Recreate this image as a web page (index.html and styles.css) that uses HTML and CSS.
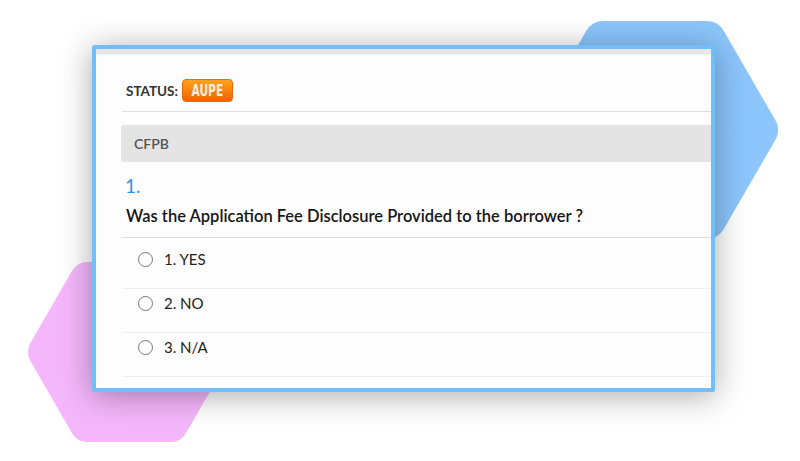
FILE: index.html
```html
<!DOCTYPE html>
<html>
<head>
<meta charset="utf-8">
<link rel="stylesheet" href="styles.css">
</head>
<body>
<div class="stage">
  <svg class="bg" width="800" height="461" viewBox="0 0 800 461">
    <polygon class="hex-blue" points="552,130 603.5,41 706.5,41 758,130 706.5,219 603.5,219"/>
    <polygon class="hex-pink" points="46,352 87.5,280 170.5,280 212,352 170.5,424 87.5,424"/>
  </svg>
  <div class="card">
    <div class="topstrip"></div>
    <div class="content">
      <div class="status">
        <span class="status-label">STATUS:</span>
        <span class="badge"><span class="badge-text">AUPE</span></span>
      </div>
      <div class="section">CFPB</div>
      <div class="qnum">1.</div>
      <div class="question">Was the Application Fee Disclosure Provided to the borrower ?</div>
      <ul class="options">
        <li class="option"><span class="radio"></span><span class="opt-text">1. YES</span></li>
        <li class="option"><span class="radio"></span><span class="opt-text">2. NO</span></li>
        <li class="option"><span class="radio"></span><span class="opt-text">3. N/A</span></li>
      </ul>
    </div>
  </div>
</div>
</body>
</html>
```

FILE: styles.css
```css
html, body {
  margin: 0;
  padding: 0;
  background: #ffffff;
}
body {
  font-family: Lato, "Open Sans", sans-serif;
}
.stage {
  position: relative;
  width: 800px;
  height: 461px;
  overflow: hidden;
}
.bg {
  position: absolute;
  left: 0;
  top: 0;
}
.hex-blue {
  fill: #8cc6fd;
  stroke: #8cc6fd;
  stroke-width: 40;
  stroke-linejoin: round;
}
.hex-pink {
  fill: #f5b7fb;
  stroke: #f5b7fb;
  stroke-width: 36;
  stroke-linejoin: round;
}
.card {
  position: relative;
  margin-left: 92px;
  top: 45px;
  width: 623px;
  height: 347px;
  box-sizing: border-box;
  border: 4px solid #72bef9;
  border-radius: 2px;
  background: #fdfdfd;
  box-shadow: 0 4px 32px rgba(0, 0, 0, 0.34);
  overflow: hidden;
}
.topstrip {
  height: 5px;
  background: #e7e7ea;
  border-bottom: 1px solid #f1f1f4;
}
.content {
  padding-left: 25px;
}
.status {
  display: flex;
  align-items: center;
  padding: 24px 0 9px 4px;
  border-bottom: 1px solid #dcdce3;
  margin-left: 1px;
}
.status-label {
  font-weight: 700;
  font-size: 13.5px;
  color: #333333;
  margin-right: 4px;
}
.badge {
  display: inline-flex;
  align-items: center;
  justify-content: center;
  width: 51px;
  height: 23px;
  box-sizing: border-box;
  border-radius: 4px;
  background: linear-gradient(#ffa21e, #f06400);
  border: 1px solid #e86a05;
}
.badge-text {
  display: inline-block;
  transform: scaleX(0.74);
  color: #fdeedd;
  font-family: "DejaVu Sans Condensed", "DejaVu Sans", sans-serif;
  font-stretch: condensed;
  font-weight: 700;
  font-size: 16px;
  line-height: 16px;
}
.section {
  margin-top: 13px;
  height: 37px;
  display: flex;
  align-items: center;
  padding-left: 13px;
  background: #e4e4e4;
  border-radius: 3px 0 0 3px;
  font-size: 14px;
  font-weight: 600;
  color: #555555;
}
.qnum {
  margin-top: 12px;
  padding-left: 4px;
  font-size: 19px;
  line-height: 24px;
  color: #3d8fda;
}
.question {
  margin-top: 7px;
  padding: 0 0 10px 5px;
  font-size: 16.5px;
  line-height: 22px;
  font-weight: 600;
  color: #161616;
  border-bottom: 1px solid #dedede;
  white-space: nowrap;
}
.options {
  list-style: none;
  margin: 7px 0 0 2px;
  padding: 0;
}
.option {
  display: flex;
  align-items: center;
  padding: 5px 0 20px 15px;
  line-height: 18px;
  border-bottom: 1px solid #efefef;
}
.radio {
  width: 15px;
  height: 15px;
  box-sizing: border-box;
  border: 1.5px solid #777777;
  border-radius: 50%;
  margin-right: 11px;
  background: #ffffff;
}
.opt-text {
  font-size: 15px;
  color: #222222;
}
```
